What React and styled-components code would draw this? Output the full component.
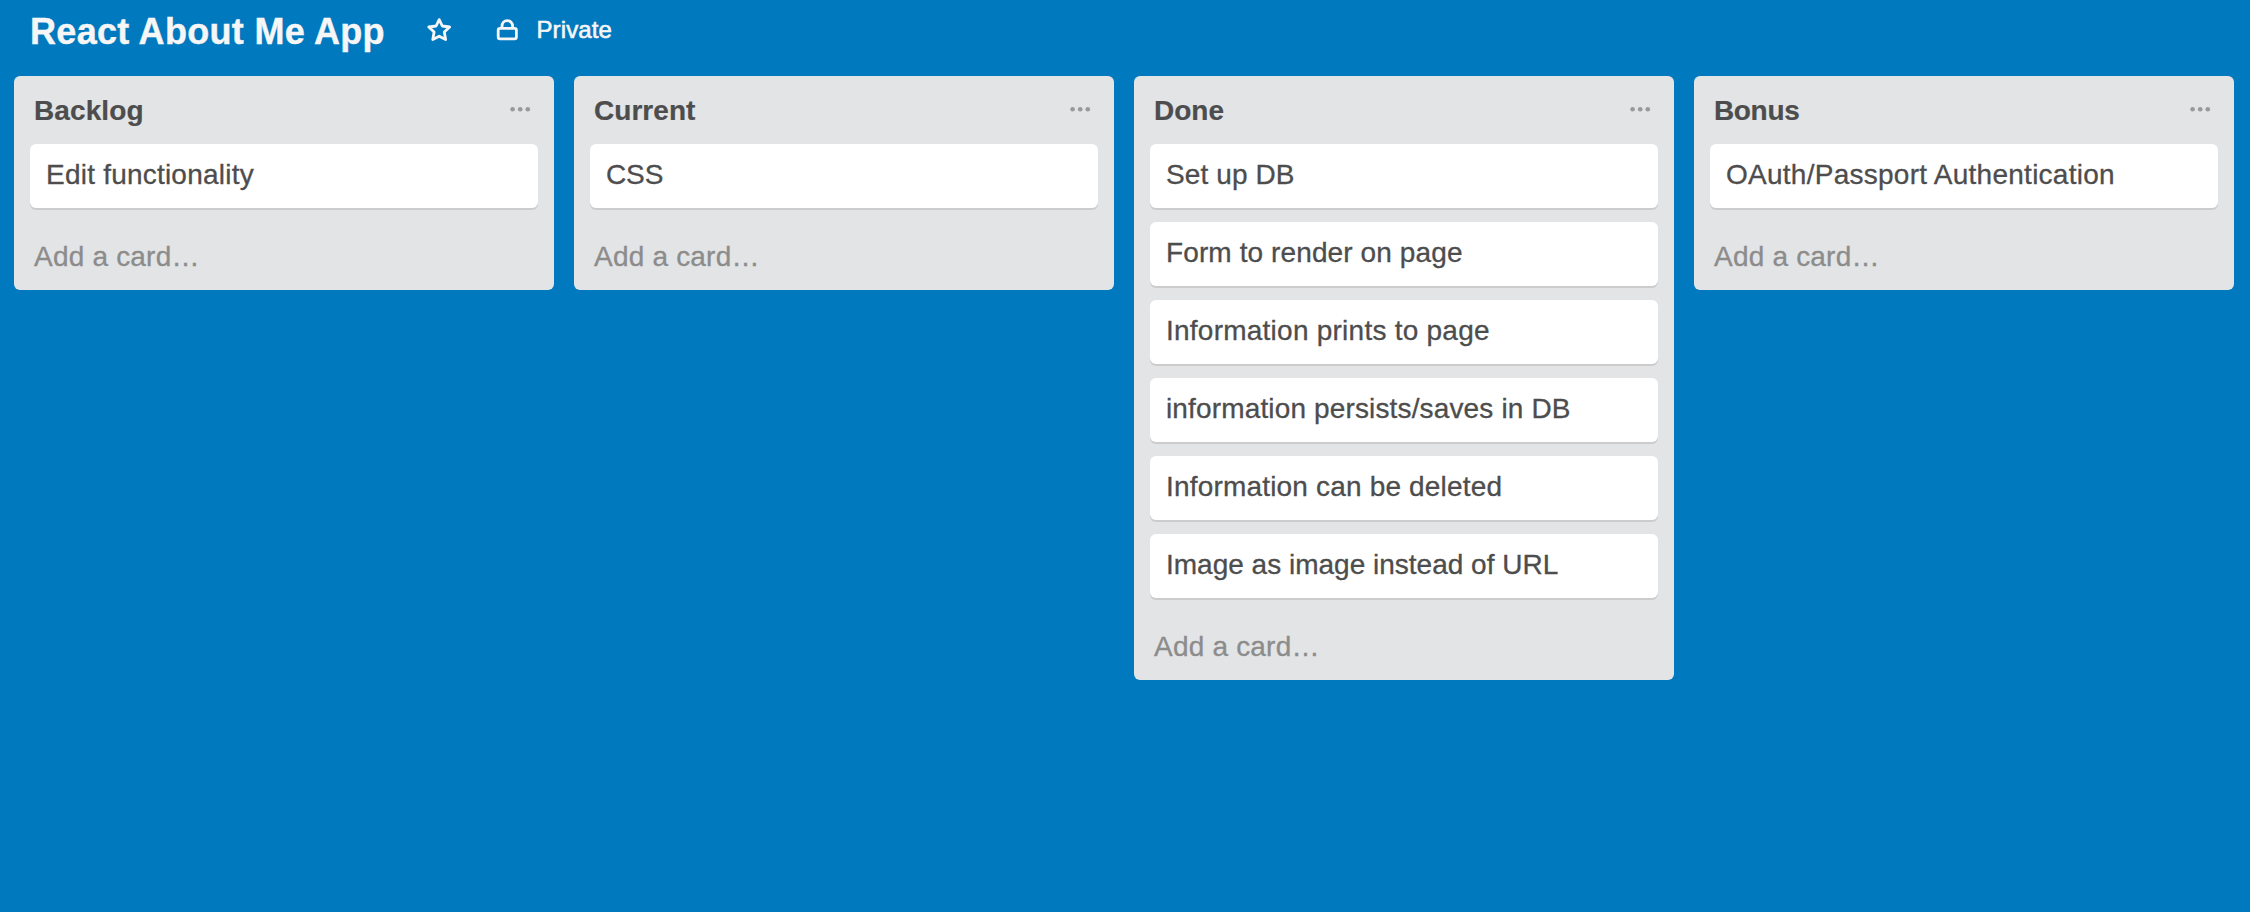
import React from "react";
import styled, { createGlobalStyle } from "styled-components";

const GlobalStyle = createGlobalStyle`
  *, *::before, *::after { box-sizing: border-box; }
  html, body, #root { height: 100%; }
  body {
    margin: 0;
    overflow: hidden;
    background: #0079bf;
    color: #4d4d4d;
    font: 28px/36px "Liberation Sans", Arial, sans-serif;
  }
  h1, h2 { margin: 0; }
`;

const Page = styled.main`
  display: flex;
  flex-direction: column;
  height: 100%;
  background: #0079bf;
`;

const BoardHeader = styled.header`
  display: flex;
  align-items: flex-start;
  height: 76px;
  padding: 10px 0 0 30px;
  color: #f6f6f6;
`;

const BoardName = styled.h1`
  width: 397px;
  padding-top: 1px;
  font-size: 36px;
  line-height: 42px;
  letter-spacing: 0.31px;
  white-space: nowrap;
  -webkit-text-stroke: 0.4px;
`;

const StarButton = styled.button`
  display: flex;
  width: 66px;
  padding: 7px 0 0;
  border: 0;
  background: none;
  color: inherit;
`;

const Visibility = styled.div`
  display: flex;
  align-items: flex-start;
  gap: 18.5px;
  padding-left: 3px;
  font-size: 24px;
  line-height: 40px;
  letter-spacing: 0.1px;
  -webkit-text-stroke: 0.6px;

  svg { margin-top: 8px; }
`;

const Lists = styled.div`
  display: flex;
  align-items: flex-start;
  gap: 20px;
  padding-left: 14px;
`;

const ListPanel = styled.section`
  flex: none;
  width: 540px;
  border-radius: 6px;
  background: #e2e4e6;
`;

const ListHeader = styled.div`
  display: flex;
  justify-content: space-between;
  height: 68px;
  padding: 17px 23.5px 0 20px;
`;

const ListName = styled.h2`
  font-size: 28px;
  line-height: 36px;
  letter-spacing: ${(p) => p.$tracking}px;
  -webkit-text-stroke: 0.2px;
`;

const MenuDots = styled.svg`
  margin-top: 12px;
  fill: #999;
`;

const Cards = styled.div`
  display: flex;
  flex-direction: column;
  gap: 14px;
  padding: 0 16px;
`;

const Card = styled.article`
  height: 64px;
  padding: 13px 16px 0;
  border-radius: 6px;
  background: #fff;
  box-shadow: 0 2px 0 #ccc;
  letter-spacing: ${(p) => p.$tracking}px;
  -webkit-text-stroke: 0.3px;
  white-space: nowrap;
`;

const AddCard = styled.div`
  height: 82px;
  padding: 31px 20px 0;
  color: #8c8c8c;
  letter-spacing: 0.2px;
  -webkit-text-stroke: 0.3px;
`;

const lists = [
  { name: "Backlog", tracking: 0.1, cards: [["Edit functionality", 0.22]] },
  { name: "Current", tracking: 0.05, cards: [["CSS", -0.1]] },
  {
    name: "Done",
    tracking: 0,
    cards: [
      ["Set up DB", 0.1],
      ["Form to render on page", 0.11],
      ["Information prints to page", 0.24],
      ["information persists/saves in DB", 0.145],
      ["Information can be deleted", 0.18],
      ["Image as image instead of URL", 0],
    ],
  },
  { name: "Bonus", tracking: -0.35, cards: [["OAuth/Passport Authentication", 0.26]] },
];

const StarIcon = () => (
  <svg width="25" height="26" viewBox="0 0 25 26" fill="none" stroke="currentColor" strokeWidth="2.8" strokeLinejoin="round">
    <path d="M12.2 2.6L15.3 9L22.6 10L17.3 15.1L18.6 22.5L12.2 19.2L5.8 22.5L7.1 15.1L1.8 10L9.1 9Z" />
  </svg>
);

const LockIcon = () => (
  <svg width="22" height="24" viewBox="0 0 22 24" fill="none" stroke="currentColor" strokeWidth="2.8">
    <rect x="2.2" y="10.4" width="18.2" height="10.4" rx="1.8" />
    <path d="M6 10.4V8.4C6 4.9 8.2 2.7 11.3 2.7S16.6 4.9 16.6 8.4V10.4" />
  </svg>
);

function List({ name, tracking, cards }) {
  return (
    <ListPanel>
      <ListHeader>
        <ListName $tracking={tracking}>{name}</ListName>
        <MenuDots width="21" height="8" viewBox="0 0 21 8">
          <circle cx="2.6" cy="4.3" r="2.3" />
          <circle cx="10.2" cy="4.3" r="2.3" />
          <circle cx="17.8" cy="4.3" r="2.3" />
        </MenuDots>
      </ListHeader>
      <Cards>
        {cards.map(([text, spacing]) => (
          <Card key={text} $tracking={spacing}>{text}</Card>
        ))}
      </Cards>
      <AddCard>Add a card…</AddCard>
    </ListPanel>
  );
}

export default function App() {
  return (
    <Page>
      <GlobalStyle />
      <BoardHeader>
        <BoardName>React About Me App</BoardName>
        <StarButton aria-label="Star board"><StarIcon /></StarButton>
        <Visibility>
          <LockIcon />
          <span>Private</span>
        </Visibility>
      </BoardHeader>
      <Lists>
        {lists.map((list) => <List key={list.name} {...list} />)}
      </Lists>
    </Page>
  );
}
